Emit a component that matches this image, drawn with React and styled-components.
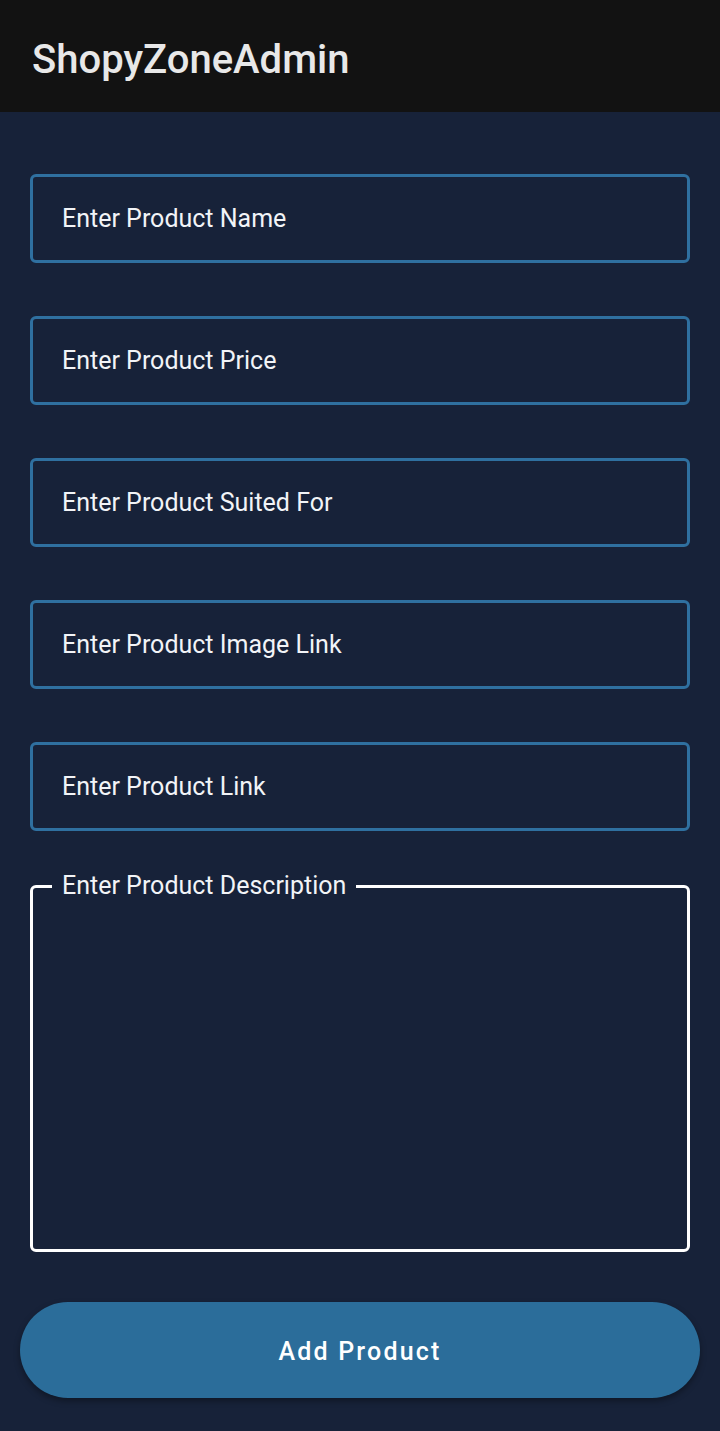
import React from "react";
import styled, { createGlobalStyle } from "styled-components";

const GlobalStyle = createGlobalStyle`
  html, body {
    margin: 0;
    padding: 0;
    background: #172239;
    font-family: Roboto, "Noto Sans", sans-serif;
  }
`;

const Page = styled.div`
  min-height: 1431px;
  background: #172239;
  display: flex;
  flex-direction: column;
`;

const Toolbar = styled.header`
  height: 112px;
  background: #121212;
  display: flex;
  align-items: center;
  padding: 0 32px;
  box-sizing: border-box;
`;

const Title = styled.h1`
  margin: 0;
  font-size: 40px;
  font-weight: 500;
  color: #e8e8e8;
  letter-spacing: 0;
  padding-top: 6px;
`;

const Form = styled.form`
  display: flex;
  flex-direction: column;
  gap: 53px;
  padding: 62px 30px 0;
`;

const Field = styled.input`
  height: 89px;
  box-sizing: border-box;
  border: 3px solid #2f70a0;
  border-radius: 6px;
  background: transparent;
  padding: 0 29px;
  font-family: Roboto, "Noto Sans", sans-serif;
  font-size: 25px;
  color: #ffffff;
  outline: none;

  &::placeholder {
    color: #f2f4f7;
    opacity: 1;
  }
`;

const Box = styled.fieldset`
  margin: -12px 0 0;
  padding: 0;
  border: 3px solid #ffffff;
  border-radius: 6px;
  display: flex;
`;

const Legend = styled.legend`
  margin-left: 19px;
  padding: 0 10px;
  font-size: 25px;
  line-height: 28px;
  color: #f2f4f7;
`;

const Area = styled.textarea`
  flex: 1;
  height: 345px;
  border: 0;
  background: transparent;
  resize: none;
  outline: none;
  color: #ffffff;
  font-family: Roboto, "Noto Sans", sans-serif;
  font-size: 25px;
`;

const Submit = styled.button`
  margin: -3px -10px 0;
  height: 96px;
  border: 0;
  border-radius: 48px;
  background: #2b6d9a;
  color: #ffffff;
  font-family: Roboto, "Noto Sans", sans-serif;
  font-size: 25px;
  font-weight: 500;
  letter-spacing: 2.2px;
  padding-top: 4px;
  box-shadow: 0 3px 6px rgba(0, 0, 0, 0.35);
  cursor: pointer;
`;

const fields = [
  "Enter Product Name",
  "Enter Product Price",
  "Enter Product Suited For",
  "Enter Product Image Link",
  "Enter Product Link"
];

const App = () => (
  <Page>
    <GlobalStyle />
    <Toolbar>
      <Title>ShopyZoneAdmin</Title>
    </Toolbar>
    <Form onSubmit={e => e.preventDefault()}>
      {fields.map(f => (
        <Field key={f} placeholder={f} />
      ))}
      <Box>
        <Legend>Enter Product Description</Legend>
        <Area />
      </Box>
      <Submit type="submit">Add Product</Submit>
    </Form>
  </Page>
);

export default App;
